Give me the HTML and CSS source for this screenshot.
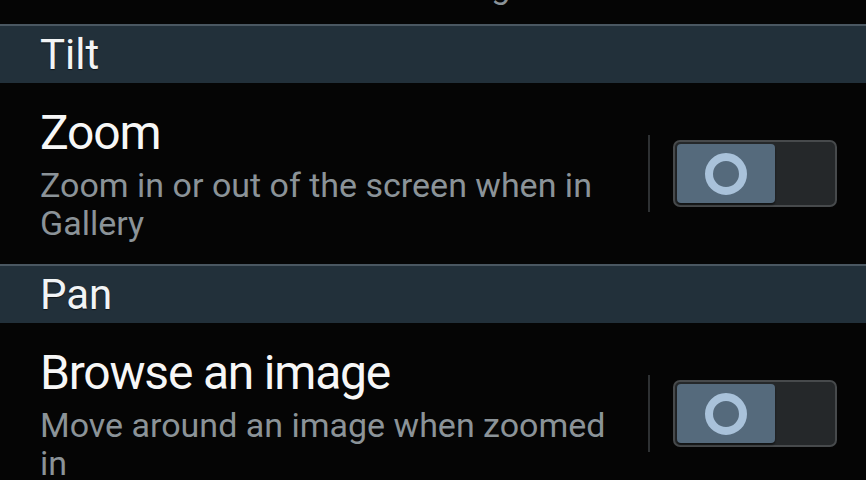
FILE: index.html
```html
<!DOCTYPE html>
<html lang="en">
<head>
    <meta charset="UTF-8">
    <meta name="viewport" content="width=device-width, initial-scale=1.0">
    <title>Motion Settings</title>
    <link rel="stylesheet" href="styles.css">
</head>
<body>
    <div class="settings-list">
        <!-- tail of the item above, scrolled out of view -->
        <div class="clipped-row">
            <p class="item-summary">Learn more about all tilt settings</p>
        </div>

        <div class="section-header">Tilt</div>
        <div class="setting-item">
            <div class="item-text">
                <h2 class="item-title">Zoom</h2>
                <p class="item-summary">Zoom in or out of the screen when in Gallery</p>
            </div>
            <div class="item-divider"></div>
            <div class="switch">
                <div class="switch-knob"><span class="knob-ring"></span></div>
            </div>
        </div>

        <div class="section-header">Pan</div>
        <div class="setting-item">
            <div class="item-text">
                <h2 class="item-title">Browse an image</h2>
                <p class="item-summary">Move around an image when zoomed in</p>
            </div>
            <div class="item-divider"></div>
            <div class="switch">
                <div class="switch-knob"><span class="knob-ring"></span></div>
            </div>
        </div>
    </div>
</body>
</html>
```

FILE: styles.css
```css
* {
    margin: 0;
    padding: 0;
    box-sizing: border-box;
    font-family: Roboto, "Liberation Sans", sans-serif;
}

body {
    background-color: #050505;
    width: 866px;
    height: 480px;
    overflow: hidden;
}

.clipped-row {
    height: 24px;
    overflow: hidden;
    padding-left: 40px;
}

.clipped-row .item-summary {
    margin-top: -33px;
}

.section-header {
    height: 59px;
    background-color: #22303a;
    border-top: 2px solid #4a5761;
    color: #f2f4f5;
    font-size: 42px;
    line-height: 57px;
    padding-left: 40px;
    text-shadow: 0 1px 1px rgba(0, 0, 0, 0.6);
}

.setting-item {
    display: flex;
    align-items: center;
    height: 181px;
    padding: 0 29px 0 40px;
}

.item-text {
    flex: 1;
    padding-right: 40px;
}

.item-title {
    color: #f7f7f7;
    font-size: 48px;
    font-weight: normal;
    letter-spacing: -1.2px;
    line-height: 56px;
    margin-bottom: 5px;
}

.item-summary {
    color: #8b9398;
    font-size: 34px;
    line-height: 38px;
}

.item-divider {
    width: 2px;
    height: 77px;
    background-color: #2e3133;
    margin-right: 23px;
}

.switch {
    width: 164px;
    height: 67px;
    padding: 2px;
    border: 2px solid #474a4c;
    border-radius: 7px;
    background-color: #25282a;
}

.switch-knob {
    display: flex;
    align-items: center;
    justify-content: center;
    width: 98px;
    height: 100%;
    background-color: #556a7c;
    border-radius: 4px;
    box-shadow: 0 2px 2px rgba(0, 0, 0, 0.5);
}

.knob-ring {
    width: 42px;
    height: 42px;
    border: 8px solid #a9c2da;
    border-radius: 50%;
}
```
